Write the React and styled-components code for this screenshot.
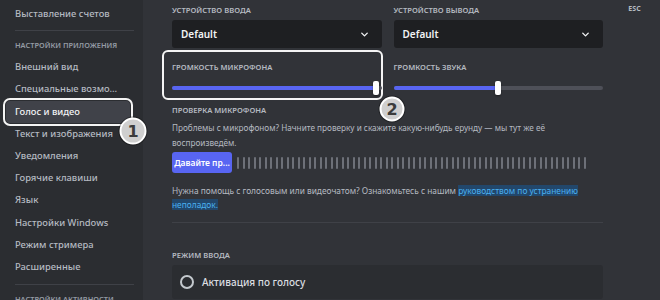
import styled, { createGlobalStyle } from "styled-components";
import { ChevronDown } from "lucide-react";

const GlobalStyle = createGlobalStyle`
  html, body {
    margin: 0;
    padding: 0;
    background: #313338;
  }
  body {
    font-family: "Noto Sans", "Open Sans", sans-serif;
  }
`;

const Shell = styled.div`
  position: relative;
  display: flex;
  width: 660px;
  height: 300px;
  overflow: hidden;
  background: #313338;
`;

const Sidebar = styled.nav`
  width: 143px;
  flex-shrink: 0;
  background: #2b2d31;
  padding: 3px 0 0 6px;
  box-sizing: border-box;
`;

const NavItem = styled.div`
  width: 124px;
  height: 22.2px;
  line-height: 22px;
  padding: 0 9px;
  box-sizing: border-box;
  border-radius: 4px;
  font-size: 9.4px;
  font-weight: 500;
  white-space: nowrap;
  overflow: hidden;
  text-overflow: ellipsis;
  color: ${(p) => (p.$active ? "#f2f3f5" : "#b5bac1")};
  background: ${(p) => (p.$active ? "#404249" : "transparent")};
  outline: ${(p) => (p.$active ? "2px solid #f4f4f4" : "none")};
  outline-offset: 1px;
`;

const NavHeading = styled.div`
  padding: 4px 9px 6px;
  line-height: 10px;
  font-size: 7.4px;
  font-weight: 600;
  color: #949ba4;
  white-space: nowrap;
`;

const NavSeparator = styled.div`
  height: 1px;
  margin: ${(p) => p.$top || 5}px 9px 5px;
  background: #3f4147;
`;

const Main = styled.main`
  flex: 1;
  display: flex;
`;

const Content = styled.div`
  width: 431px;
  padding: 4px 0 0 29px;
  display: flex;
  flex-direction: column;
`;

const Tools = styled.div`
  flex: 1;
  display: flex;
  justify-content: center;
  padding: 3px 0 0 6px;
`;

const EscLabel = styled.div`
  font-size: 7px;
  font-weight: 700;
  line-height: 12px;
  color: #b5bac1;
`;

const Columns = styled.div`
  display: grid;
  grid-template-columns: 1fr 1fr;
  column-gap: 12px;
  row-gap: 13px;
`;

const Field = styled.div`
  position: relative;
  display: flex;
  flex-direction: column;

  ${(p) =>
    p.$highlight &&
    `
    &::before {
      content: "";
      position: absolute;
      left: -10px;
      right: -1px;
      top: -11px;
      bottom: -5px;
      border: 2px solid #f4f4f4;
      border-radius: 6px;
      pointer-events: none;
    }
  `}
`;

const Label = styled.div`
  font-size: 7.6px;
  font-weight: 600;
  line-height: 12px;
  color: #b5bac1;
  text-transform: uppercase;
  white-space: nowrap;
  margin-bottom: ${(p) => p.$gap || 0}px;
`;

const Select = styled.div`
  height: 28px;
  display: flex;
  align-items: center;
  justify-content: space-between;
  padding: 0 12px 0 9px;
  background: #1e1f22;
  border-radius: 3px;
  font-size: 10px;
  font-weight: 600;
  color: #f2f3f5;
`;

const Slider = styled.div`
  position: relative;
  height: 15px;
  margin-top: 7px;
  display: flex;
  align-items: center;
`;

const Track = styled.div`
  position: relative;
  width: 100%;
  height: 4px;
  border-radius: 2px;
  background: #4e5058;
`;

const Fill = styled.div`
  height: 100%;
  border-radius: 2px;
  background: #5865f2;
`;

const Thumb = styled.div`
  position: absolute;
  top: 50%;
  width: 6px;
  height: 14px;
  transform: translate(-50%, -50%);
  border-radius: 2px;
  background: #ffffff;
  box-shadow: 0 1px 2px rgba(0, 0, 0, 0.4);
`;

const Section = styled.section`
  display: flex;
  flex-direction: column;
  margin-top: ${(p) => p.$top || 0}px;
`;

const Text = styled.p`
  margin: ${(p) => p.$top || 0}px 0 0;
  font-size: ${(p) => p.$size || 9}px;
  line-height: ${(p) => p.$lh || 15}px;
  color: #b5bac1;
`;

const Link = styled.span`
  color: #4ab0f0;
  background: #22476b;
`;

const TestRow = styled.div`
  display: flex;
  align-items: center;
  gap: 5px;
  margin-top: 2.5px;
`;

const TestButton = styled.button`
  width: 60px;
  height: 21px;
  flex-shrink: 0;
  padding: 0;
  border: none;
  border-radius: 3px;
  background: #5865f2;
  color: #ffffff;
  font-family: inherit;
  font-size: 8.5px;
  font-weight: 600;
`;

const Meter = styled.div`
  display: flex;
  align-items: center;
  gap: 3.5px;
`;

const MeterBar = styled.span`
  width: 2px;
  height: 12px;
  border-radius: 1px;
  background: #6d7078;
`;

const Divider = styled.div`
  height: 1px;
  margin-top: 10.5px;
  background: #3f4147;
`;

const RadioOption = styled.div`
  display: flex;
  align-items: center;
  gap: 8px;
  padding: 10px 8px;
  border-radius: 3px;
  background: #2b2d31;
  font-size: 10px;
  font-weight: 500;
  line-height: 14px;
  color: #dbdee1;
`;

const RadioRing = styled.span`
  width: 10px;
  height: 10px;
  border-radius: 50%;
  border: 2px solid #c4c9ce;
  flex-shrink: 0;
`;

const Badge = styled.div`
  position: absolute;
  left: ${(p) => p.$x}px;
  top: ${(p) => p.$y}px;
  width: ${(p) => p.$size}px;
  height: ${(p) => p.$size}px;
  transform: translate(-50%, -50%);
  box-sizing: border-box;
  border-radius: 50%;
  border: 2px solid #ffffff;
  background: #cfcfcf;
  display: flex;
  align-items: center;
  justify-content: center;
  font-family: "DejaVu Sans", sans-serif;
  font-size: 16px;
  font-weight: 700;
  color: #3b3b3b;
  box-shadow: 0 0 0 1px rgba(0, 0, 0, 0.35);
`;

const navTop = ["Выставление счетов"];
const appSettings = [
  "Внешний вид",
  "Специальные возможности",
  "Голос и видео",
  "Текст и изображения",
  "Уведомления",
  "Горячие клавиши",
  "Язык",
  "Настройки Windows",
  "Режим стримера",
  "Расширенные",
];

const VolumeSlider = ({ value }) => (
  <Slider>
    <Track>
      <Fill style={{ width: `${value}%` }} />
    </Track>
    <Thumb style={{ left: `${value}%` }} />
  </Slider>
);

const App = () => {
  return (
    <>
      <GlobalStyle />
      <Shell>
        <Sidebar>
          {navTop.map((item) => (
            <NavItem key={item}>{item}</NavItem>
          ))}
          <NavSeparator />
          <NavHeading>НАСТРОЙКИ ПРИЛОЖЕНИЯ</NavHeading>
          {appSettings.map((item) => (
            <NavItem key={item} $active={item === "Голос и видео"}>
              {item}
            </NavItem>
          ))}
          <NavSeparator $top={6} />
          <NavHeading>НАСТРОЙКИ АКТИВНОСТИ</NavHeading>
        </Sidebar>

        <Main>
          <Content>
            <Columns>
              <Field>
                <Label $gap={4}>Устройство ввода</Label>
                <Select>
                  Default
                  <ChevronDown size={11} strokeWidth={3} color="#f2f3f5" />
                </Select>
              </Field>
              <Field>
                <Label $gap={4}>Устройство вывода</Label>
                <Select>
                  Default
                  <ChevronDown size={11} strokeWidth={3} color="#f2f3f5" />
                </Select>
              </Field>
              <Field $highlight>
                <Label>Громкость микрофона</Label>
                <VolumeSlider value={97.5} />
              </Field>
              <Field>
                <Label>Громкость звука</Label>
                <VolumeSlider value={50} />
              </Field>
            </Columns>

            <Section $top={9}>
              <Label>Проверка микрофона</Label>
              <Text $top={3.5} $size={8.2}>
                Проблемы с микрофоном? Начните проверку и скажите какую-нибудь
                ерунду — мы тут же её воспроизведём.
              </Text>
              <TestRow>
                <TestButton>Давайте пр...</TestButton>
                <Meter>
                  {Array.from({ length: 64 }, (_, i) => (
                    <MeterBar key={i} />
                  ))}
                </Meter>
              </TestRow>
              <Text $top={10.5} $lh={14} $size={8.35}>
                Нужна помощь с голосовым или видеочатом? Ознакомьтесь с нашим{" "}
                <Link>руководством по устранению неполадок.</Link>
              </Text>
              <Divider />
            </Section>

            <Section $top={26}>
              <Label $gap={4}>Режим ввода</Label>
              <RadioOption>
                <RadioRing />
                Активация по голосу
              </RadioOption>
            </Section>
          </Content>
          <Tools>
            <EscLabel>ESC</EscLabel>
          </Tools>
        </Main>

        <Badge $x={133} $y={131} $size={27}>1</Badge>
        <Badge $x={392} $y={109} $size={25}>2</Badge>
      </Shell>
    </>
  );
};

export default App;
